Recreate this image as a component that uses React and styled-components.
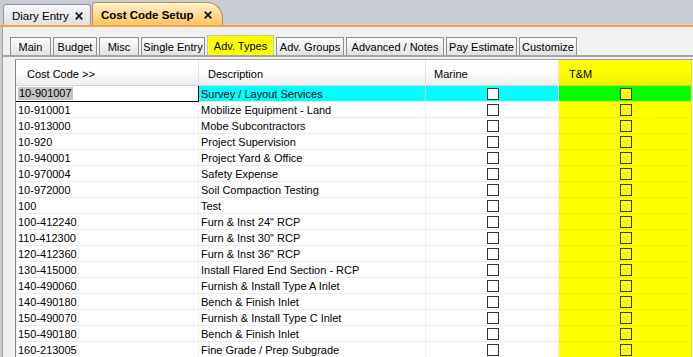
import React from 'react';
import styled, { createGlobalStyle } from 'styled-components';

const COLS = '183px 227px 133px 133px';

const GlobalStyle = createGlobalStyle`
  html, body {
    margin: 0;
    padding: 0;
    overflow: hidden;
    background: #c8ccd4;
  }
  body {
    font-family: "Liberation Sans", Arial, sans-serif;
    font-size: 11px;
    color: #000;
  }
`;

const Screen = styled.div`
  width: 693px;
  height: 357px;
  display: flex;
  flex-direction: column;
  overflow: hidden;
  background: #c8ccd4;
`;

const DocBar = styled.div`
  flex: none;
  box-sizing: border-box;
  height: 27px;
  display: flex;
  align-items: flex-end;
  gap: 1px;
  padding-left: 3px;
  border-bottom: 2px solid #f5a445;
`;

const DocTab = styled.div`
  box-sizing: border-box;
  width: ${p => p.$w}px;
  height: ${p => (p.$active ? 23 : 21)}px;
  display: flex;
  align-items: center;
  justify-content: space-between;
  padding: 1px ${p => (p.$active ? 10 : 7)}px 0 8px;
  border: 1px solid ${p => (p.$active ? '#c38f48' : '#9296a0')};
  border-bottom: none;
  border-radius: ${p => (p.$active ? '3px 16px 0 0' : '3px 3px 0 0')};
  background: ${p =>
    p.$active
      ? 'linear-gradient(#fff1d0, #ffd98c 55%, #ffc460)'
      : 'linear-gradient(#f7f7f8, #dfe0e3)'};
  font-size: ${p => (p.$active ? '11.5px' : '11.5px')};
  font-weight: ${p => (p.$active ? 700 : 400)};
  white-space: nowrap;
`;

const CloseIcon = () => (
  <svg width="8" height="8" viewBox="0 0 8 8">
    <path d="M0.7 0.7 L7.3 7.3 M7.3 0.7 L0.7 7.3" stroke="#111" strokeWidth="1.7" fill="none" />
  </svg>
);

const Panel = styled.div`
  flex: 1;
  min-height: 0;
  margin-left: 2px;
  background: #f0f0f0;
  border-left: 1px solid #9ea2a8;
  display: flex;
  flex-direction: column;
`;

const TabStrip = styled.div`
  flex: none;
  height: 20px;
  margin-top: 8px;
  padding-left: 7px;
  display: flex;
  align-items: flex-end;
  gap: 2px;
  border-bottom: 2px solid #a3a4a6;
`;

const PageTab = styled.div`
  box-sizing: border-box;
  width: ${p => p.$w}px;
  height: ${p => (p.$active ? 20 : 18)}px;
  display: flex;
  align-items: center;
  justify-content: center;
  border: 1px solid ${p => (p.$active ? '#c9c9a0' : '#8f9091')};
  border-bottom: none;
  background: ${p => (p.$active ? '#ffff00' : 'linear-gradient(#fbfbfb, #e3e3e3)')};
  white-space: nowrap;
`;

const Content = styled.div`
  flex: 1;
  min-height: 0;
  padding: 2px 0 0 12px;
`;

const Grid = styled.div`
  border-top: 1px solid #a0a0a0;
  border-left: 1px solid #858585;
  background: #fff;
  width: 677px;
`;

const Row = styled.div`
  display: grid;
  grid-template-columns: ${COLS};
`;

const HeadCell = styled.div`
  box-sizing: border-box;
  height: 26px;
  padding: 2px 0 0 ${p => p.$pad}px;
  display: flex;
  align-items: center;
  border-right: 1px solid ${p => (p.$yellow ? '#e2e200' : '#e4e4e4')};
  border-bottom: 1px solid ${p => (p.$yellow ? '#d8d800' : '#d2d2d2')};
  background: ${p =>
    p.$yellow
      ? 'linear-gradient(#ffff00, #ffff00 45%, #efef00)'
      : 'linear-gradient(#ffffff, #ffffff 40%, #eeeeef)'};
`;

const Cell = styled.div`
  box-sizing: border-box;
  height: 16px;
  padding-left: 2px;
  display: flex;
  align-items: center;
  justify-content: ${p => (p.$center ? 'center' : 'flex-start')};
  background: ${p => p.$bg || '#fff'};
  border-right: 1px solid ${p => (p.$focus ? '#000' : p.$line || '#efefef')};
  border-bottom: 1px solid ${p => (p.$focus ? '#000' : p.$line || '#ebebeb')};
  white-space: nowrap;
  overflow: hidden;
`;

const Selected = styled.span`
  background: #c4c4c4;
  padding: 0 1px;
  line-height: 13px;
`;

const Check = styled.span`
  box-sizing: border-box;
  width: 12px;
  height: 12px;
  border: 1px solid #333;
  background: ${p => p.$fill};
`;

const rows = [
  ['10-901007', 'Survey / Layout Services'],
  ['10-910001', 'Mobilize Equipment - Land'],
  ['10-913000', 'Mobe Subcontractors'],
  ['10-920', 'Project Supervision'],
  ['10-940001', 'Project Yard & Office'],
  ['10-970004', 'Safety Expense'],
  ['10-972000', 'Soil Compaction Testing'],
  ['100', 'Test'],
  ['100-412240', 'Furn & Inst 24" RCP'],
  ['110-412300', 'Furn & Inst 30" RCP'],
  ['120-412360', 'Furn & Inst 36" RCP'],
  ['130-415000', 'Install Flared End Section - RCP'],
  ['140-490060', 'Furnish & Install Type A Inlet'],
  ['140-490180', 'Bench & Finish Inlet'],
  ['150-490070', 'Furnish & Install Type C Inlet'],
  ['150-490180', 'Bench & Finish Inlet'],
  ['160-213005', 'Fine Grade / Prep Subgrade'],
];

const pageTabs = [
  ['Main', 41],
  ['Budget', 44],
  ['Misc', 40],
  ['Single Entry', 64],
  ['Adv. Types', 67, true],
  ['Adv. Groups', 68],
  ['Advanced / Notes', 98],
  ['Pay Estimate', 71],
  ['Customize', 58],
];

export default function App() {
  return (
    <Screen>
      <GlobalStyle />
      <DocBar>
        <DocTab $w={88}>
          Diary Entry
          <CloseIcon />
        </DocTab>
        <DocTab $w={131} $active>
          Cost Code Setup
          <CloseIcon />
        </DocTab>
      </DocBar>
      <Panel>
        <TabStrip>
          {pageTabs.map(([label, w, active]) => (
            <PageTab key={label} $w={w} $active={active}>
              {label}
            </PageTab>
          ))}
        </TabStrip>
        <Content>
          <Grid>
            <Row>
              <HeadCell $pad={11}>Cost Code &gt;&gt;</HeadCell>
              <HeadCell $pad={9}>Description</HeadCell>
              <HeadCell $pad={8}>Marine</HeadCell>
              <HeadCell $pad={10} $yellow>T&amp;M</HeadCell>
            </Row>
            {rows.map(([code, desc], i) => {
              const current = i === 0;
              return (
                <Row key={code + i}>
                  <Cell $focus={current}>
                    {current ? <Selected>{code}</Selected> : code}
                  </Cell>
                  <Cell $bg={current ? '#00ffff' : undefined}>{desc}</Cell>
                  <Cell $center $bg={current ? '#00ffff' : undefined}>
                    <Check $fill="#fff" />
                  </Cell>
                  <Cell $center $bg={current ? '#00ff00' : '#ffff00'} $line="#f2f200">
                    <Check $fill="#ffff00" />
                  </Cell>
                </Row>
              );
            })}
          </Grid>
        </Content>
      </Panel>
    </Screen>
  );
}
